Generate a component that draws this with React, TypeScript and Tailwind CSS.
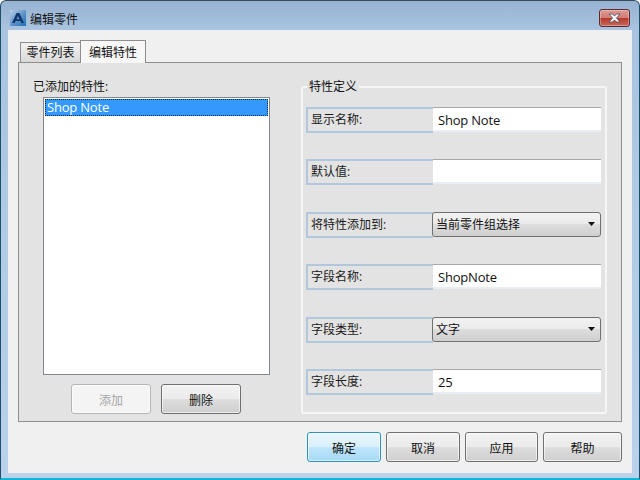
import React from "react";

const FONT = "font-['Open_Sans','Noto_Sans_CJK_SC',sans-serif]";

const AppLogo: React.FC = () => (
  <svg width="16" height="16" viewBox="0 0 16 16" className="shrink-0">
    <defs>
      <linearGradient id="logoBg" x1="0" y1="0" x2="1" y2="1">
        <stop offset="0" stopColor="#b9cfe4" />
        <stop offset="0.55" stopColor="#5b93c8" />
        <stop offset="1" stopColor="#1f6fb5" />
      </linearGradient>
    </defs>
    <rect width="16" height="16" fill="url(#logoBg)" />
    <path d="M2 13 L6.5 3 H9.5 L14 13 H11.3 L10.5 11 H5.5 L4.7 13 Z" fill="#12366e" />
    <path d="M6.6 9.2 L8 6 L9.4 9.2 Z" fill="#6d9ccb" />
  </svg>
);

const CloseButton: React.FC = () => (
  <div className="flex h-[18px] w-[31px] items-center justify-center rounded-[3px] border border-[#5e2a30] bg-[linear-gradient(#dc9a92_0%,#d07f76_48%,#b8392c_52%,#c9695c_100%)] shadow-[inset_0_0_0_1px_rgba(255,255,255,0.3)]">
    <svg width="13" height="10" viewBox="0 0 13 10">
      <path
        d="M1 1 H4.5 L6.5 3 L8.5 1 H12 L8.5 5 L12 9 H8.5 L6.5 7 L4.5 9 H1 L4.5 5 Z"
        fill="#f1f3f6"
        stroke="#4b4f5c"
        strokeWidth="0.8"
      />
    </svg>
  </div>
);

type ButtonProps = {
  label: string;
  width: string;
  variant?: "normal" | "primary" | "disabled";
};

const DialogButton: React.FC<ButtonProps> = ({ label, width, variant = "normal" }) => {
  let look =
    "border-[#707070] bg-[linear-gradient(#f2f2f2_0%,#ebebeb_50%,#dddddd_52%,#cfcfcf_100%)] text-[#111]";
  if (variant === "primary") {
    look =
      "border-[#2c92c6] bg-[linear-gradient(#eaf6fd_0%,#d9f0fc_50%,#bee6fd_52%,#a7d9f5_100%)] text-[#111]";
  }
  if (variant === "disabled") {
    look = "border-[#b5b5b5] bg-[#f4f4f4] text-[#a6a6a6]";
  }

  return (
    <div
      className={`flex h-[30px] items-center justify-center rounded-[3px] border pt-[3px] text-[12px] shadow-[inset_0_0_0_1px_rgba(255,255,255,0.6)] ${width} ${look}`}
    >
      {label}
    </div>
  );
};

const FieldLabel: React.FC<{ text: string }> = ({ text }) => (
  <div className="flex h-[26px] w-[127px] shrink-0 items-center border-2 border-r-0 border-[#b3c7dc] bg-[#e3e3e3] pl-[3px] text-[12px] text-[#1a1a1a]">
    {text}
  </div>
);

const TextRow: React.FC<{ label: string; value?: string }> = ({ label, value }) => (
  <div className="flex h-[26px]">
    <FieldLabel text={label} />
    <div className="flex h-[25px] flex-1 items-center border-t border-b-2 border-t-[#a8a8a8] border-b-[#e9eef5] bg-white pl-[5px] pt-[3px] text-[13px] tracking-[-0.2px] text-[#111]">
      {value}
    </div>
  </div>
);

const SelectRow: React.FC<{ label: string; value: string }> = ({ label, value }) => (
  <div className="flex h-[26px]">
    <FieldLabel text={label} />
    <div className="-ml-px flex h-[25px] flex-1 items-center justify-between rounded-[3px] border border-[#707070] bg-[linear-gradient(#f2f2f2_0%,#ebebeb_45%,#dddddd_50%,#cfcfcf_100%)] pl-[3px] pr-[5px] text-[12px] text-[#111]">
      <span className="pt-[2px]">{value}</span>
      <svg width="7" height="4" viewBox="0 0 7 4">
        <path d="M0 0 H7 L3.5 4 Z" fill="#111" />
      </svg>
    </div>
  </div>
);

export default function App() {
  return (
    <div
      className={`${FONT} flex h-[480px] w-[640px] flex-col overflow-hidden rounded-t-[6px] border-b-2 border-x border-t border-x-[#1f4e6b] border-t-[#3b4a58] border-b-[#12b5d8] bg-[linear-gradient(#97b3d2_0%,#a9c4e0_6%,#bad2eb_100%)]`}
    >
      <div className="flex h-[29px] shrink-0 items-center pl-[9px] pr-[9px] pt-[5px]">
        <AppLogo />
        <span className="ml-[4px] pt-[3px] text-[12px] text-[#111]">编辑零件</span>
        <div className="ml-auto">
          <CloseButton />
        </div>
      </div>

      <div className="mx-[7px] mb-[5px] flex flex-1 flex-col bg-[#f0f0f0] px-[10px] pt-[10px]">
        <div className="flex h-[22px] items-end pl-[2px]">
          <div className="flex h-[20px] w-[61px] items-center justify-center border border-b-0 border-[#8e8e8e] bg-[linear-gradient(#f2f2f2,#d9d9d9)] pt-px text-[12px] text-[#111]">
            零件列表
          </div>
          <div className="relative z-10 -mb-px -ml-px flex h-[23px] w-[66px] items-center justify-center border border-b-0 border-[#8e8e8e] bg-[#f7f7f7] pt-px text-[12px] text-[#111]">
            编辑特性
          </div>
        </div>

        <div className="flex h-[360px] border border-[#8e8e8e] bg-[#e3e3e3]">
          <div className="ml-[14px] flex w-[253px] flex-col pt-[15px]">
            <div className="h-[19px] text-[12px] leading-[17px] text-[#111]">已添加的特性:</div>
            <div className="ml-[10px] h-[278px] w-[227px] border border-[#828790] bg-white p-px">
              <div className="flex h-[17px] items-center border border-dotted border-[#0b2a4d] bg-[#3399ff] pl-px text-[13px] tracking-[-0.2px] text-white">
                Shop Note
              </div>
            </div>
            <div className="ml-[38px] mt-[9px] flex gap-[10px]">
              <DialogButton label="添加" width="w-[80px]" variant="disabled" />
              <DialogButton label="删除" width="w-[80px]" />
            </div>
          </div>

          <fieldset className="ml-[15px] mt-[15px] h-[336px] w-[306px] rounded-[3px] border-2 border-[#f6f6f6] pl-[3px] pr-[4px] text-[#111]">
            <legend className="ml-[1px] px-[2px] text-[12px] leading-[17px]">特性定义</legend>
            <div className="mt-[12px] flex h-[288px] flex-col justify-between">
              <TextRow label="显示名称:" value="Shop Note" />
              <TextRow label="默认值:" />
              <SelectRow label="将特性添加到:" value="当前零件组选择" />
              <TextRow label="字段名称:" value="ShopNote" />
              <SelectRow label="字段类型:" value="文字" />
              <TextRow label="字段长度:" value="25" />
            </div>
          </fieldset>
        </div>

        <div className="mt-[10px] flex justify-end gap-[5px]">
          <DialogButton label="确定" width="w-[74px]" variant="primary" />
          <DialogButton label="取消" width="w-[74px]" />
          <DialogButton label="应用" width="w-[73px]" />
          <DialogButton label="帮助" width="w-[79px]" />
        </div>
      </div>
    </div>
  );
}
